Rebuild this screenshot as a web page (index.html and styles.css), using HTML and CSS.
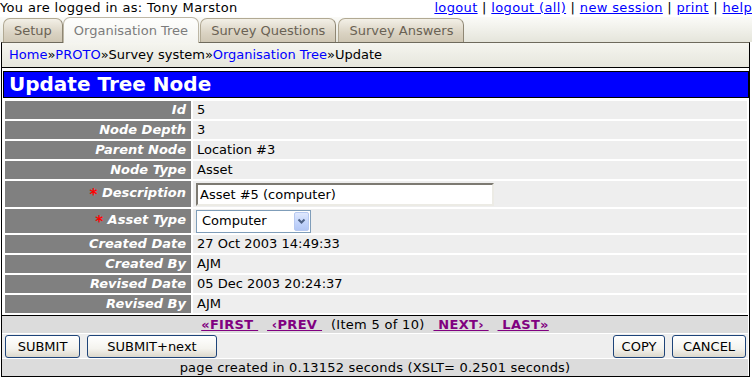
FILE: index.html
```html
<!DOCTYPE html>
<html lang="en"><head>
    <meta charset="UTF-8">
    <title>Update Tree Node</title>
    <link rel="stylesheet" href="styles.css">
</head>
<body>
    <div class="top">
        <span>You are logged in as: Tony Marston</span>
        <span><a href="#">logout</a> | <a href="#">logout (all)</a> | <a href="#">new session</a> | <a href="#">print</a> | <a href="#">help</a></span>
    </div>
    <div class="tabs">
        <span class="tab">Setup</span>
        <span class="tab active">Organisation Tree</span>
        <span class="tab">Survey Questions</span>
        <span class="tab">Survey Answers</span>
    </div>
    <div class="frame">
        <div class="crumbs"><a href="#">Home</a>»<a href="#">PROTO</a>»Survey system»<a href="#">Organisation Tree</a>»Update</div>
        <div class="heading">Update Tree Node</div>
        <table class="form">
            <tr><td class="lbl">Id</td><td class="val">5</td></tr>
            <tr><td class="lbl">Node Depth</td><td class="val">3</td></tr>
            <tr><td class="lbl">Parent Node</td><td class="val">Location #3</td></tr>
            <tr><td class="lbl">Node Type</td><td class="val">Asset</td></tr>
            <tr class="tall"><td class="lbl"><span class="req">*</span> Description</td><td class="val"><input class="text" type="text" value="Asset #5 (computer)"></td></tr>
            <tr class="mid"><td class="lbl"><span class="req">*</span> Asset Type</td><td class="val">
                <span class="select"><span class="select-txt">Computer</span><span class="select-btn"><svg width="13" height="17" viewBox="0 0 13 17"><path d="M3.5 6.5 L6.5 9.5 L9.5 6.5" fill="none" stroke="#4d6185" stroke-width="2"/></svg></span></span>
            </td></tr>
            <tr><td class="lbl">Created Date</td><td class="val">27 Oct 2003 14:49:33</td></tr>
            <tr><td class="lbl">Created By</td><td class="val">AJM</td></tr>
            <tr><td class="lbl">Revised Date</td><td class="val">05 Dec 2003 20:24:37</td></tr>
            <tr><td class="lbl">Revised By</td><td class="val">AJM</td></tr>
        </table>
        <div class="pager">
            <a href="#">«FIRST&nbsp;</a> &nbsp;<a href="#">&nbsp;‹PREV&nbsp;</a> &nbsp;(Item 5 of 10) &nbsp;<a href="#">&nbsp;NEXT›&nbsp;</a> &nbsp;<a href="#">&nbsp;LAST»</a>
        </div>
        <div class="actions">
            <div class="group">
                <button class="btn w-submit">SUBMIT</button>
                <button class="btn w-next">SUBMIT+next</button>
            </div>
            <div class="group">
                <button class="btn w-copy">COPY</button>
                <button class="btn w-cancel">CANCEL</button>
            </div>
        </div>
        <div class="footer">page created in 0.13152 seconds (XSLT= 0.2501 seconds)</div>
    </div>
</body>
</html>
```

FILE: styles.css
```css
body {
    margin: 0;
    font-family: "DejaVu Sans", Verdana, sans-serif;
    font-size: 13px;
    color: #000;
}
a {
    color: #00f;
}
.top {
    display: flex;
    justify-content: space-between;
    height: 17px;
    line-height: 16px;
    letter-spacing: 0.35px;
    white-space: nowrap;
}
.tabs {
    display: flex;
    align-items: flex-end;
    gap: 2px;
    height: 25px;
    padding-left: 3px;
    background: linear-gradient(#fbfbf8, #e5e5db);
}
.tab {
    box-sizing: border-box;
    height: 24px;
    line-height: 23px;
    padding: 0 10px;
    border: 1px solid #b1a993;
    border-bottom: none;
    border-right-color: #8f8774;
    border-radius: 7px 7px 0 0;
    background: linear-gradient(#f3f0e7, #dad3c3 60%, #cfc7b4);
    color: #6a6254;
    white-space: nowrap;
}
.tab.active {
    position: relative;
    z-index: 1;
    height: 26px;
    margin: 0 -1px -1px -2px;
    line-height: 25px;
    border-color: #bdb7a6;
    background: linear-gradient(#fefefd, #f4f4ef);
    color: #7c7c7c;
}
.frame {
    margin: 0 2px 0 1px;
    border: 1px solid #000;
    border-top-color: #6e6a5c;
}
.crumbs {
    height: 24px;
    line-height: 24px;
    padding-left: 7px;
    border-bottom: 1px solid #000;
    background: linear-gradient(#f5f5ef, #e6e6dd);
}
.crumbs a {
    text-decoration: none;
}
.heading {
    height: 25px;
    margin: 3px 0 1px 1px;
    padding-left: 5px;
    border: 1px solid #000;
    background: #00f;
    color: #fff;
    font-size: 20px;
    font-weight: bold;
    line-height: 25px;
}
.form {
    width: 746px;
    margin-left: 1px;
    border-spacing: 2px;
}
.form td {
    height: 18px;
    padding: 0;
    line-height: 18px;
    vertical-align: middle;
}
.form .tall td {
    height: 26px;
}
.form .mid td {
    height: 24px;
}
.lbl {
    width: 181px;
    padding-right: 5px !important;
    background: #808080;
    color: #fff;
    font-style: italic;
    font-weight: bold;
    text-align: right;
    white-space: nowrap;
}
.req {
    color: #f00;
    font-size: 15px;
    font-style: normal;
    vertical-align: -3px;
}
.val {
    padding-left: 4px !important;
    background: #eee;
}
.text {
    box-sizing: border-box;
    width: 298px;
    height: 23px;
    margin: 0 0 0 -1px;
    padding: 0 2px;
    border: 2px solid #ecebe5;
    border-top-color: #7d7a72;
    border-left-color: #7d7a72;
    font-family: inherit;
    font-size: 13px;
    vertical-align: middle;
}
.select {
    box-sizing: border-box;
    display: inline-flex;
    align-items: center;
    width: 115px;
    height: 23px;
    margin-left: -1px;
    padding: 1px;
    border: 1px solid #7f9db9;
    background: #fff;
    vertical-align: middle;
}
.select-txt {
    flex: 1;
    padding-left: 4px;
}
.select-btn {
    display: flex;
    width: 13px;
    height: 17px;
    border: 1px solid #b7c9f1;
    border-radius: 2px;
    background: linear-gradient(#e0e9fe, #c1d3fb 60%, #b3c7f5);
}
.pager {
    height: 17px;
    margin-right: 1px;
    border-top: 1px solid #000;
    background: #dcdcdc;
    line-height: 17px;
    letter-spacing: 0.3px;
    text-align: center;
    white-space: nowrap;
}
.pager a {
    color: #800080;
    font-weight: bold;
}
.actions {
    display: flex;
    justify-content: space-between;
    align-items: center;
    height: 24px;
    margin-right: 1px;
    padding: 0 2px 0 3px;
    border-top: 1px solid #fff;
    background: #eee;
}
.group {
    display: flex;
    gap: 7px;
}
.btn {
    height: 23px;
    padding: 0;
    border: 1px solid #1e4479;
    border-radius: 3px;
    background: linear-gradient(#fff, #f4f3ee 60%, #dcd8cc);
    color: #000;
    font-family: inherit;
    font-size: 13px;
}
.w-submit { width: 75px; }
.w-next { width: 130px; }
.w-copy { width: 52px; }
.w-cancel { width: 74px; }
.footer {
    height: 17px;
    margin-right: 1px;
    border-top: 1px solid #fff;
    background: #dcdcdc;
    line-height: 17px;
    letter-spacing: 0.2px;
    text-align: center;
}
```
